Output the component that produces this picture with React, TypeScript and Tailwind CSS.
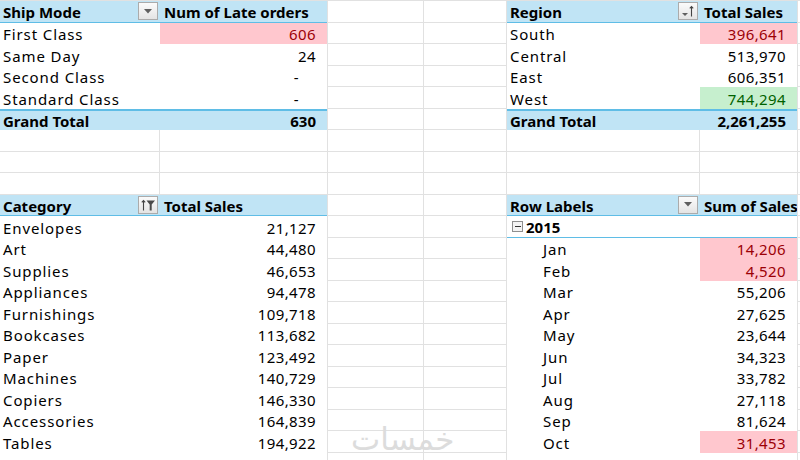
import type { ReactNode } from "react";

type Kind = "grid" | "hdr" | "data" | "tot" | "yr";
type Cell = {
  kind: Kind;
  text?: string;
  num?: boolean;
  dash?: boolean;
  fill?: "pink" | "green";
  btn?: "down" | "sort" | "filter";
  indent?: boolean;
};

const g: Cell = { kind: "grid" };
const d = (text: string, fill?: "pink" | "green"): Cell => ({ kind: "data", text, num: true, fill });
const lbl = (text: string, indent = false): Cell => ({ kind: "data", text, indent });

// left pivot pair, right pivot pair per sheet row
const rows: [Cell, Cell, Cell, Cell][] = [
  [
    { kind: "hdr", text: "Ship Mode", btn: "down" },
    { kind: "hdr", text: "Num of Late orders" },
    { kind: "hdr", text: "Region", btn: "sort" },
    { kind: "hdr", text: "Total Sales" },
  ],
  [lbl("First Class"), d("606", "pink"), lbl("South"), d("396,641", "pink")],
  [lbl("Same Day"), d("24"), lbl("Central"), d("513,970")],
  [lbl("Second Class"), { kind: "data", text: "-", dash: true }, lbl("East"), d("606,351")],
  [lbl("Standard Class"), { kind: "data", text: "-", dash: true }, lbl("West"), d("744,294", "green")],
  [
    { kind: "tot", text: "Grand Total" },
    { kind: "tot", text: "630", num: true },
    { kind: "tot", text: "Grand Total" },
    { kind: "tot", text: "2,261,255", num: true },
  ],
  [g, g, g, g],
  [g, g, g, g],
  [g, g, g, g],
  [
    { kind: "hdr", text: "Category", btn: "filter" },
    { kind: "hdr", text: "Total Sales" },
    { kind: "hdr", text: "Row Labels", btn: "down" },
    { kind: "hdr", text: "Sum of Sales" },
  ],
  [lbl("Envelopes"), d("21,127"), { kind: "yr", text: "2015" }, { kind: "yr" }],
  [lbl("Art"), d("44,480"), lbl("Jan", true), d("14,206", "pink")],
  [lbl("Supplies"), d("46,653"), lbl("Feb", true), d("4,520", "pink")],
  [lbl("Appliances"), d("94,478"), lbl("Mar", true), d("55,206")],
  [lbl("Furnishings"), d("109,718"), lbl("Apr", true), d("27,625")],
  [lbl("Bookcases"), d("113,682"), lbl("May", true), d("23,644")],
  [lbl("Paper"), d("123,492"), lbl("Jun", true), d("34,323")],
  [lbl("Machines"), d("140,729"), lbl("Jul", true), d("33,782")],
  [lbl("Copiers"), d("146,330"), lbl("Aug", true), d("27,118")],
  [lbl("Accessories"), d("164,839"), lbl("Sep", true), d("81,624")],
  [lbl("Tables"), d("194,922"), lbl("Oct", true), d("31,453", "pink")],
  [lbl("Storage"), d("218,604"), lbl("Nov", true), d("77,966")],
];

function FilterButton({ type }: { type: "down" | "sort" | "filter" }) {
  return (
    <span className="flex h-[18px] w-[20px] shrink-0 items-center justify-center border border-[#ababab] bg-linear-to-b from-[#fbfbfb] to-[#e4e4e4]">
      {type === "down" && (
        <svg width="8" height="5" viewBox="0 0 8 5">
          <path d="M0 0h8L4 4.5z" fill="#5f5f5f" />
        </svg>
      )}
      {type === "sort" && (
        <svg width="16" height="14" viewBox="0 0 16 14">
          <path d="M2 9h6l-3 3z" fill="#5f5f5f" />
          <path d="M11.5 2.5v10M9.8 4.4l1.7-1.9 1.7 1.9" stroke="#444" strokeWidth="1.1" fill="none" />
        </svg>
      )}
      {type === "filter" && (
        <svg width="16" height="14" viewBox="0 0 16 14">
          <path d="M3.5 2.5v10M1.8 4.4l1.7-1.9 1.7 1.9" stroke="#444" strokeWidth="1.1" fill="none" />
          <path d="M6.5 2.5h8.5l-3.3 4v6h-2v-6z" fill="#4a4a4a" />
        </svg>
      )}
    </span>
  );
}

function PivotCell({ cell, wide }: { cell: Cell; wide?: boolean }) {
  if (cell.kind === "grid") {
    return <div className={wide ? "border-b border-r border-[#e1e1e1]" : "border-b border-[#e1e1e1]"} />;
  }

  const base = "flex items-center overflow-hidden whitespace-nowrap pt-[2px] leading-[20px] text-[15px]";
  let look = "bg-white text-black";
  if (cell.kind === "hdr") look = "bg-[#c0e4f5] border-b-[1.5px] border-[#5fbde6] font-bold text-black";
  if (cell.kind === "tot") look = "bg-[#c0e4f5] border-t-2 border-[#5fbde6] font-bold text-black";
  if (cell.kind === "yr") look = "bg-white border-b border-[#5fbde6] font-bold text-black";
  if (cell.fill === "pink") look = "bg-[#ffc7ce] text-[#9c0006]";
  if (cell.fill === "green") look = "bg-[#c6efce] text-[#006100]";

  let body: ReactNode = cell.text;
  let pad = "pl-[3px]";
  let align = "justify-start";
  let track = cell.kind === "data" ? "tracking-[0.9px]" : "";

  if (cell.num || cell.dash) {
    align = "justify-end";
    pad = cell.dash ? "pr-[28px]" : "pr-[11px]";
    track = cell.kind === "data" ? "tracking-[0.4px]" : "";
  }
  if (cell.indent) pad = "pl-[36px]";
  if (cell.kind === "hdr" && !cell.btn) pad = "pl-[4px]";

  if (cell.btn) {
    align = "justify-between";
    pad = "pl-[3px] pr-[2px]";
    body = (
      <>
        <span>{cell.text}</span>
        <span className="-mt-[2px]">
          <FilterButton type={cell.btn} />
        </span>
      </>
    );
  }

  if (cell.kind === "yr" && cell.text) {
    pad = "pl-[5px]";
    body = (
      <>
        <span className="-mt-[1px] mr-[3px] flex h-[11px] w-[11px] items-center justify-center border border-[#8f8f8f] bg-[#f4f4f4]">
          <span className="h-[1px] w-[6px] bg-[#333]" />
        </span>
        <span>{cell.text}</span>
      </>
    );
  }

  return <div className={`${base} ${look} ${pad} ${align} ${track}`}>{body}</div>;
}

export default function App() {
  return (
    <div className="relative h-[460px] w-[800px] overflow-hidden bg-white font-['Noto_Sans',sans-serif]">
      <div className="grid auto-rows-[21.5px] grid-cols-[160px_167px_97px_83px_193px_97px_3px] border-t border-[#e1e1e1]">
        {rows.map(([a, b, e, f], i) => (
          <div key={i} className="contents">
            <PivotCell cell={a} wide />
            <PivotCell cell={b} />
            <div className="border-b border-l border-r border-[#e1e1e1]" />
            <div className="border-b border-r border-[#e1e1e1]" />
            <PivotCell cell={e} wide />
            <PivotCell cell={f} />
            <div className="border-b border-l border-[#e1e1e1]" />
          </div>
        ))}
      </div>

      {/* site watermark */}
      <div className="pointer-events-none absolute left-[351px] top-[424px] font-['DejaVu_Sans',sans-serif] text-[31px] leading-none text-[#dcdcdc]">
        خمسات
      </div>
    </div>
  );
}
